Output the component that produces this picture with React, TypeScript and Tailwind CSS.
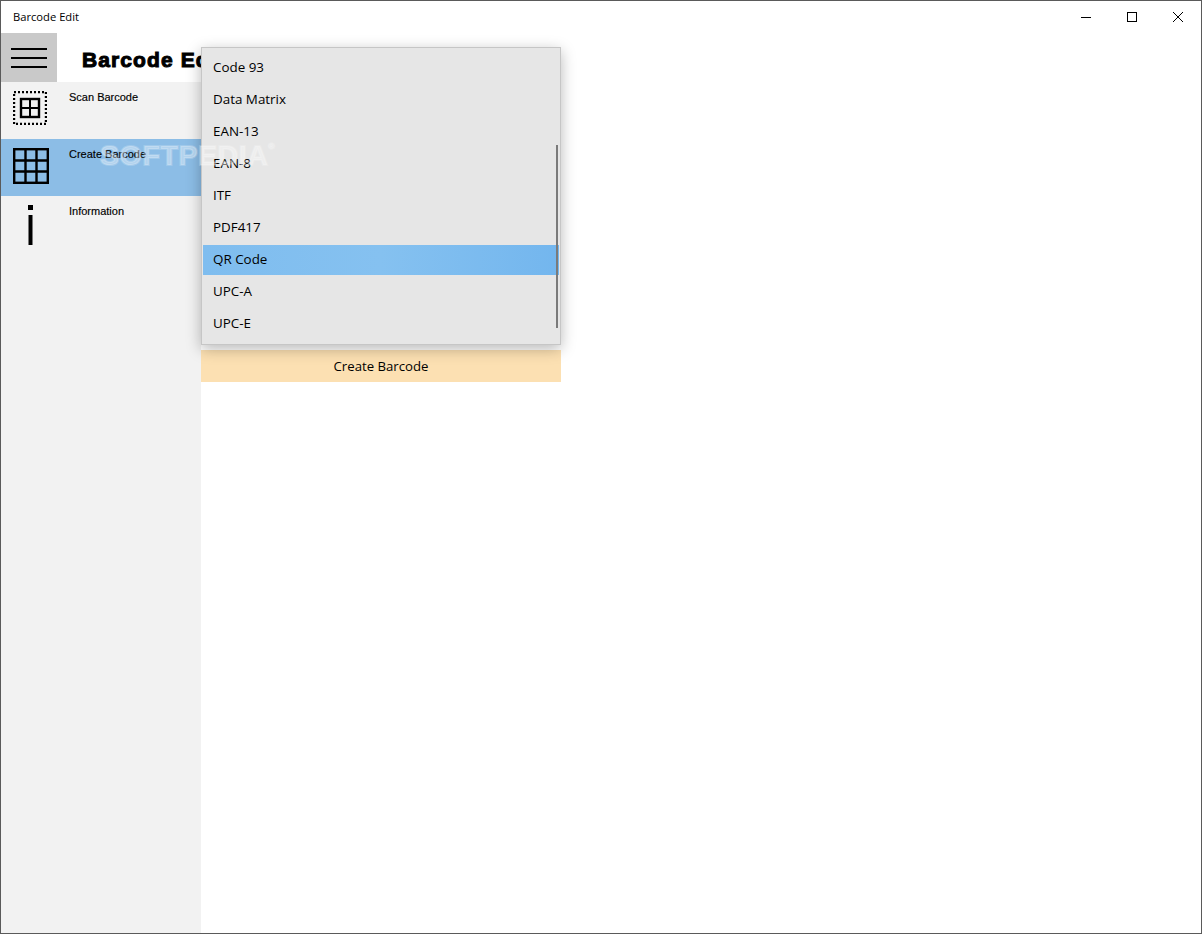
import React from 'react';

const options = ['Code 93', 'Data Matrix', 'EAN-13', 'EAN-8', 'ITF', 'PDF417', 'QR Code', 'UPC-A', 'UPC-E'];

const ScanIcon = () => (
  <svg width="34" height="34" viewBox="0 0 34 34" fill="none" stroke="#000">
    <rect x="1" y="1" width="32" height="32" strokeWidth="2.4" strokeDasharray="2 2" />
    <rect x="8" y="8" width="18" height="18" strokeWidth="2.4" />
    <path d="M17 8v18M8 17h18" strokeWidth="2" />
  </svg>
);

const GridIcon = () => (
  <svg width="36" height="36" viewBox="0 0 36 36" fill="none" stroke="#000" strokeWidth="2.4">
    <rect x="1.2" y="1.2" width="33.6" height="33.6" />
    <path d="M12.5 1v34M23.5 1v34M1 12.5h34M1 23.5h34" />
  </svg>
);

const InfoIcon = () => (
  <svg width="8" height="40" viewBox="0 0 8 40" fill="#000">
    <rect x="1" y="0" width="5" height="5" />
    <rect x="1.5" y="10" width="4" height="30" />
  </svg>
);

const navItems = [
  { label: 'Scan Barcode', icon: <ScanIcon />, active: false, iconClass: 'pt-[9px] pl-[12px]' },
  { label: 'Create Barcode', icon: <GridIcon />, active: true, iconClass: 'pt-[9px] pl-[12px]' },
  { label: 'Information', icon: <InfoIcon />, active: false, iconClass: 'pt-[9px] pl-[26px]' },
];

export default function App() {
  return (
    <div className="relative h-[934px] w-[1202px] overflow-hidden border border-[#5a5a5a] bg-white font-['Open_Sans','Noto_Sans',sans-serif] text-black">
      {/* title bar */}
      <div className="flex h-[32px] items-center justify-between">
        <span className="pl-3 text-[11.2px]">Barcode Edit</span>
        <div className="flex items-center">
          <div className="flex h-[32px] w-[46px] items-center justify-center">
            <svg width="10" height="10" viewBox="0 0 10 10" stroke="#000"><path d="M0 5.5h10" /></svg>
          </div>
          <div className="flex h-[32px] w-[46px] items-center justify-center">
            <svg width="10" height="10" viewBox="0 0 10 10" fill="none" stroke="#000"><rect x="0.5" y="0.5" width="9" height="9" /></svg>
          </div>
          <div className="flex h-[32px] w-[46px] items-center justify-center">
            <svg width="10" height="10" viewBox="0 0 10 10" stroke="#000"><path d="M0 0l10 10M10 0L0 10" /></svg>
          </div>
        </div>
      </div>

      {/* header */}
      <div className="flex h-[49px]">
        <div className="flex w-[56px] flex-col items-center justify-center gap-[7px] bg-[#c9c9c9]">
          <div className="h-[2px] w-[36px] bg-black" />
          <div className="h-[2px] w-[36px] bg-black" />
          <div className="h-[2px] w-[36px] bg-black" />
        </div>
        <div className="pl-[25px] pt-[12px] font-['Liberation_Sans',sans-serif] text-[21px] leading-[30px] font-bold tracking-[1.1px] [-webkit-text-stroke:1px_#000]">
          Barcode Edit
        </div>
      </div>

      <div className="flex">
        {/* sidebar */}
        <nav className="h-[852px] w-[200px] bg-[#f2f2f2]">
          {navItems.map(item => (
            <div key={item.label} className={`flex h-[57px] ${item.active ? 'bg-[#8cbde6]' : ''}`}>
              <div className={`w-[68px] ${item.iconClass}`}>{item.icon}</div>
              <span className="pt-[8px] font-['Liberation_Sans',sans-serif] text-[11px] leading-[14px] [-webkit-text-stroke:0.15px_#000]">
                {item.label}
              </span>
            </div>
          ))}
        </nav>

        {/* form area */}
        <main className="flex-1 pt-[268px]">
          <button type="button" className="h-[32px] w-[360px] bg-[#fce0b2] text-center text-[13.2px] leading-[32px]">
            Create Barcode
          </button>
        </main>
      </div>

      {/* dropdown */}
      <div className="absolute left-[200px] top-[46px] h-[298px] w-[360px] border border-[#c6c6c6] bg-[#e6e6e6] pt-[4px] shadow-[0_4px_14px_rgba(0,0,0,0.28)]">
        {options.map(option => (
          <div key={option} className="mx-[1px] flex h-[32px] items-center">
            <div
              className={`flex h-[30px] w-full items-center pb-[2px] pl-[10px] text-[13.4px] ${
                option === 'QR Code' ? 'bg-gradient-to-r from-[#7fbdef] via-[#85c1f0] to-[#73b6ee]' : ''
              }`}
            >
              {option}
            </div>
          </div>
        ))}
        <div className="absolute right-[2px] top-[97px] h-[183px] w-[2px] bg-[#7a7a7a]" />
      </div>

      {/* watermark */}
      <div className="pointer-events-none absolute left-[99px] top-[136px] font-['Liberation_Sans',sans-serif] text-[28.5px] leading-[36px] font-bold tracking-[0.6px] text-white/35 [-webkit-text-stroke:2px_rgba(255,255,255,0.2)]">
        SOFTPEDIA<span className="align-top text-[8px] leading-[20px]">®</span>
      </div>
    </div>
  );
}
